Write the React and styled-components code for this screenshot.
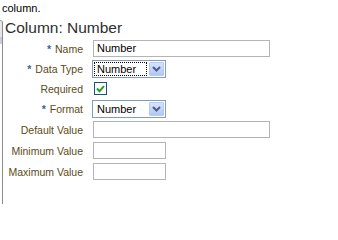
import styled, { createGlobalStyle } from "styled-components";

const GlobalStyle = createGlobalStyle`
  body {
    margin: 0;
    background: #fff;
    font-family: "Liberation Sans", Arial, sans-serif;
  }
`;

const Page = styled.div`
  width: 338px;
  height: 214px;
  overflow: hidden;
`;

const Intro = styled.div`
  font-size: 11px;
  line-height: 13px;
  padding: 2px 0 0 2px;
  color: #000;
`;

const Panel = styled.div`
  display: flex;
  margin-top: 5px;
`;

const Rail = styled.div`
  width: 3px;
  height: 184px;
  box-sizing: border-box;
  border-top: 1px solid #a4a4a4;
  border-right: 1px solid #8c8c8c;
  border-top-right-radius: 4px;
  background: linear-gradient(#ebebeb 0, #e4e4e4 16px, #c8cdd8 16px, #c8cdd8 23px, #fff 23px);
`;

const Content = styled.div`
  flex: 1;
  padding-left: 1px;
`;

const Heading = styled.div`
  font-size: 15.5px;
  line-height: 16px;
  color: #2e2e2e;
  padding-left: 1px;
`;

const Form = styled.div`
  margin-top: 2px;
`;

const Row = styled.div`
  display: grid;
  grid-template-columns: 79px 1fr;
  column-gap: 10px;
  align-items: center;
  height: ${(p) => p.$h || 21}px;
`;

const Label = styled.div`
  text-align: right;
  font-size: 10.5px;
  color: #5b4b16;
  white-space: nowrap;
`;

const Star = styled.span`
  color: #2f64ad;
  font-weight: bold;
  margin-right: 4px;
`;

const TextBox = styled.div`
  box-sizing: border-box;
  width: ${(p) => p.$w}px;
  height: 17px;
  border: 1px solid #b4b4b4;
  padding-left: 3px;
  font-size: 11px;
  line-height: 15px;
  color: #000;
`;

const Select = styled.div`
  box-sizing: border-box;
  width: 74px;
  height: 18px;
  margin-left: -1px;
  border: 1px solid #7f9db9;
  padding: 1px;
  display: flex;
  align-items: center;
  gap: 2px;
`;

const Value = styled.div`
  flex: 1;
  box-sizing: border-box;
  height: 14px;
  border: 1px dotted ${(p) => (p.$focused ? "#000" : "transparent")};
  padding-left: 2px;
  font-size: 11px;
  line-height: 12px;
  color: #000;
`;

const Arrow = styled.div`
  box-sizing: border-box;
  width: 15px;
  height: 14px;
  border: 1px solid #b6c9f4;
  border-radius: 1px;
  background: linear-gradient(#d6e3fe, #b3c7f5);
  display: flex;
  align-items: center;
  justify-content: center;
`;

const Check = styled.div`
  box-sizing: border-box;
  width: 13px;
  height: 13px;
  margin-left: 1px;
  border: 1px solid #1c5180;
  background: #fff;
  display: flex;
  align-items: center;
  justify-content: center;
`;

function Chevron() {
  return (
    <svg width="9" height="6" viewBox="0 0 9 6">
      <path d="M1 1 L4.5 4.5 L8 1" fill="none" stroke="#4d6185" strokeWidth="2" />
    </svg>
  );
}

function Dropdown({ value, focused }) {
  return (
    <Select>
      <Value $focused={focused}>{value}</Value>
      <Arrow>
        <Chevron />
      </Arrow>
    </Select>
  );
}

function Field({ label, required, h, children }) {
  return (
    <Row $h={h}>
      <Label>
        {required && <Star>*</Star>}
        {label}
      </Label>
      <div>{children}</div>
    </Row>
  );
}

export default function App() {
  return (
    <Page>
      <GlobalStyle />
      <Intro>column.</Intro>
      <Panel>
        <Rail />
        <Content>
          <Heading>Column: Number</Heading>
          <Form>
            <Field label="Name" required>
              <TextBox $w={177}>Number</TextBox>
            </Field>
            <Field label="Data Type" required h={20}>
              <Dropdown value="Number" focused />
            </Field>
            <Field label="Required" h={19}>
              <Check>
                <svg width="9" height="8" viewBox="0 0 9 8">
                  <path d="M1 3.5 L3.5 6.2 L8 1.2" fill="none" stroke="#21a121" strokeWidth="2" />
                </svg>
              </Check>
            </Field>
            <Field label="Format" required>
              <Dropdown value="Number" />
            </Field>
            <Field label="Default Value">
              <TextBox $w={177} />
            </Field>
            <Field label="Minimum Value">
              <TextBox $w={73} />
            </Field>
            <Field label="Maximum Value">
              <TextBox $w={73} />
            </Field>
          </Form>
        </Content>
      </Panel>
    </Page>
  );
}
